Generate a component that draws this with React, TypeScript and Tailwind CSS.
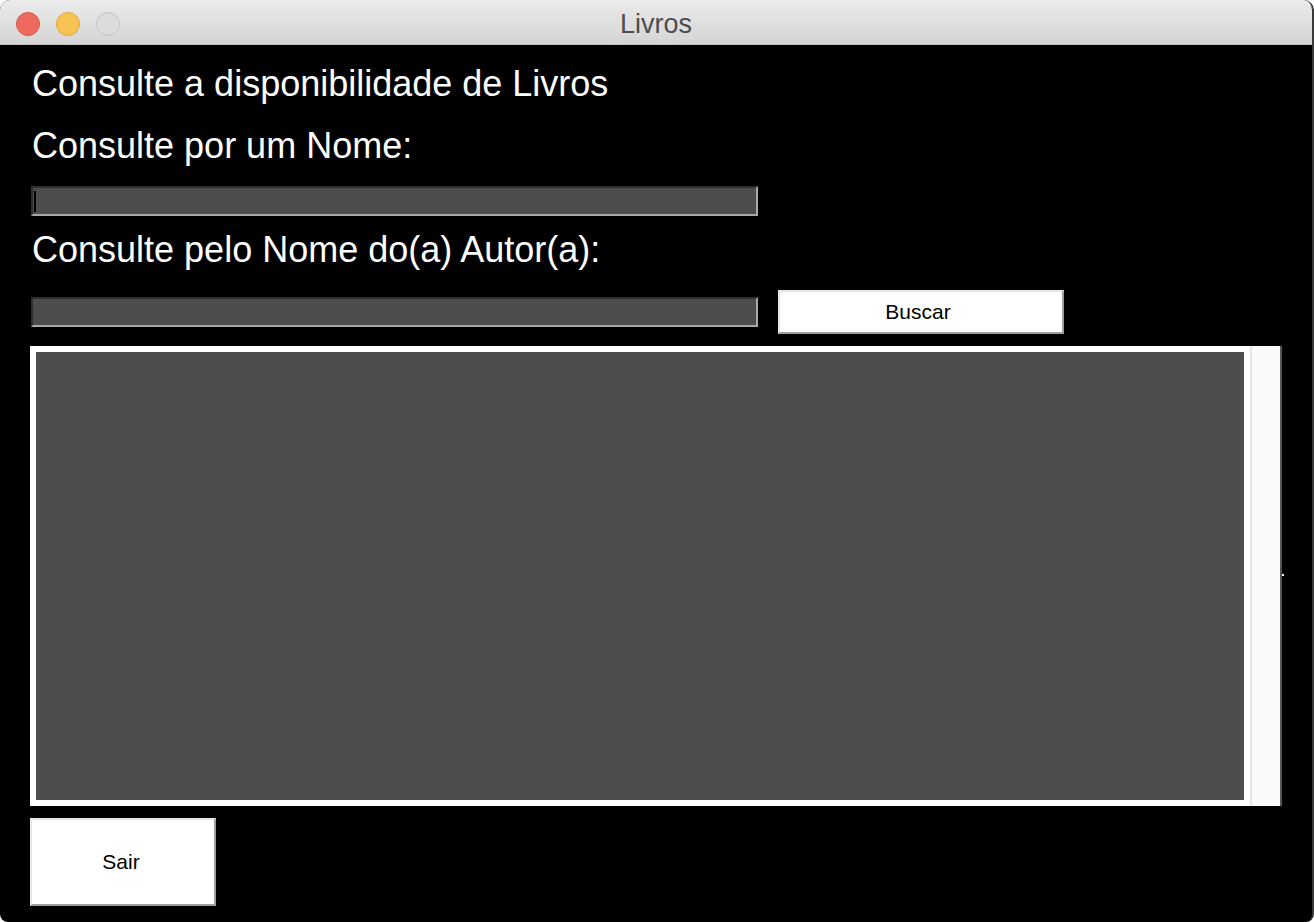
export default function App() {
  return (
    <div className="w-[1314px] h-[922px] bg-white font-['Liberation_Sans',Arial,sans-serif]">
      <div className="w-full h-full flex flex-col rounded-t-[10px] rounded-b-[8px] overflow-hidden bg-black border-r-2 border-[#3a3a3a]">
        {/* title bar */}
        <div className="relative h-[45px] shrink-0 flex items-center justify-center bg-gradient-to-b from-[#ebebeb] to-[#d5d5d5] border-b border-[#bdbdbd]">
          <div className="absolute left-[16px] top-[12px] flex gap-[16px]">
            <span className="w-[24px] h-[24px] rounded-full bg-[#ee6a5f] border border-[#d8574c]" />
            <span className="w-[24px] h-[24px] rounded-full bg-[#f6c352] border border-[#dba93b]" />
            <span className="w-[24px] h-[24px] rounded-full bg-[#dcdcdc] border border-[#c4c4c4]" />
          </div>
          <span className="pt-[4px] text-[27px] text-[#4d4d4d] leading-none">Livros</span>
        </div>

        {/* body */}
        <div className="flex flex-col pl-[30px] text-white">
          <div className="mt-[17px] h-[44px] flex items-center pl-[2px] text-[36px] leading-none">
            Consulte a disponibilidade de Livros
          </div>
          <div className="mt-[18px] h-[44px] flex items-center pl-[2px] text-[36px] leading-none">
            Consulte por um Nome:
          </div>
          <div className="mt-[18px] ml-[1px] w-[727px] h-[30px] bg-[#4d4d4d] border-2 border-t-[#2f2f2f] border-l-[#2f2f2f] border-b-[#a8a8a8] border-r-[#a8a8a8] flex items-center">
            <span className="ml-[1px] w-[2px] h-[21px] bg-black" />
          </div>
          <div className="mt-[12px] h-[44px] flex items-center pl-[2px] text-[36px] leading-none">
            Consulte pelo Nome do(a) Autor(a):
          </div>
          <div className="mt-[18px] h-[44px] flex items-center">
            <div className="ml-[1px] w-[727px] h-[30px] bg-[#4d4d4d] border-2 border-t-[#2f2f2f] border-l-[#2f2f2f] border-b-[#a8a8a8] border-r-[#a8a8a8]" />
            <button className="ml-[20px] w-[286px] h-[44px] pr-[6px] bg-white border-2 border-t-[#e6e6e6] border-l-[#e6e6e6] border-b-[#9e9e9e] border-r-[#9e9e9e] text-black text-[21px] flex items-center justify-center">
              Buscar
            </button>
          </div>
          <div className="mt-[12px] w-[1252px] h-[460px] flex">
            <div className="w-[1220px] h-full bg-white p-[6px]">
              <div className="w-full h-full bg-[#4d4d4d]" />
            </div>
            <div className="relative w-[32px] h-full bg-[#fafafa] border-l-2 border-[#e6e6e6] border-r-2 border-r-[#555555]">
              <span className="absolute right-[-4px] top-[228px] w-[2px] h-[2px] bg-white" />
            </div>
          </div>
          <button className="mt-[12px] w-[186px] h-[88px] pr-[4px] bg-white border-2 border-t-[#e6e6e6] border-l-[#e6e6e6] border-b-[#9e9e9e] border-r-[#9e9e9e] text-black text-[21px] flex items-center justify-center">
            Sair
          </button>
        </div>
      </div>
    </div>
  );
}
